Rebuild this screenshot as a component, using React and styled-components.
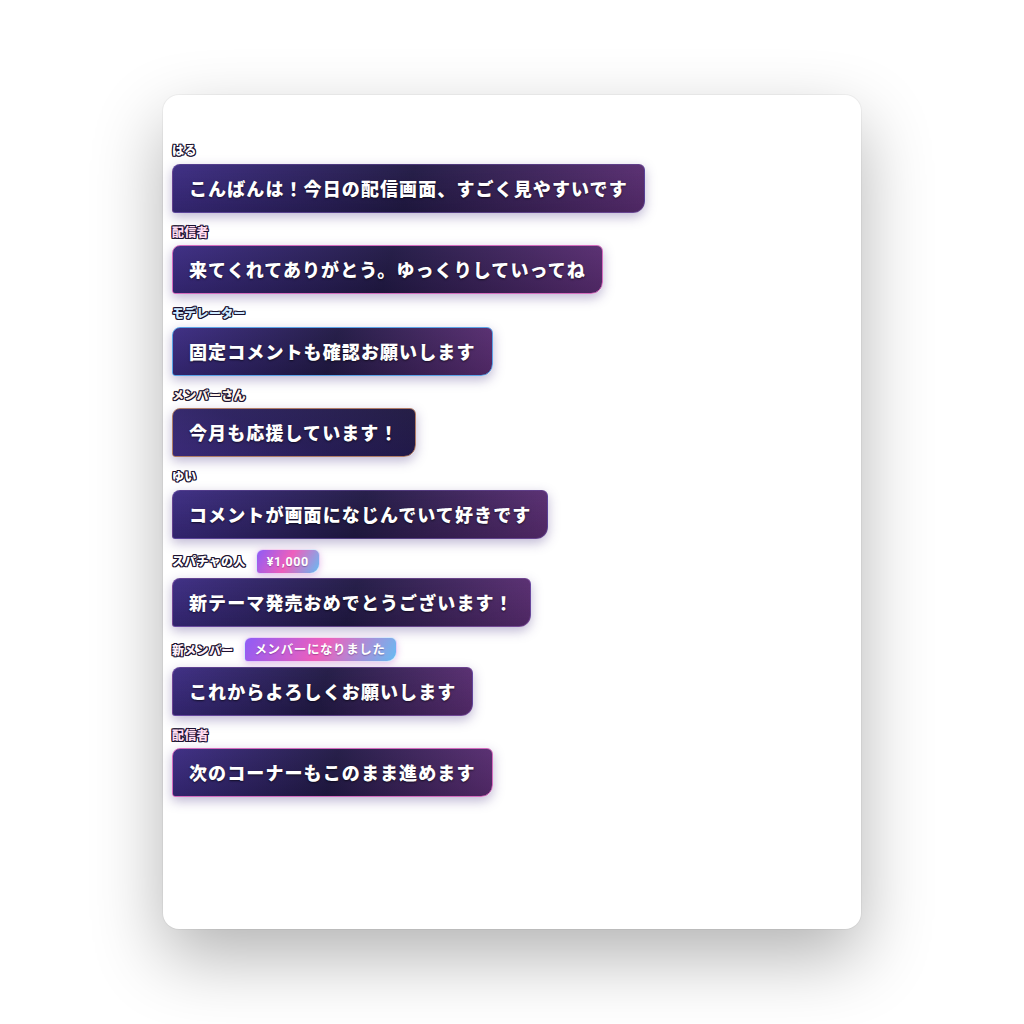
import React from "react";
import styled, { createGlobalStyle } from "styled-components";

const GlobalStyle = createGlobalStyle`
  html, body {
    margin: 0;
    padding: 0;
    background: #ffffff;
  }
  body {
    font-family: "Noto Sans CJK JP", "Noto Sans", sans-serif;
  }
`;

const Stage = styled.div`
  min-height: 100vh;
  display: flex;
  align-items: center;
  justify-content: center;
`;

const Card = styled.div`
  width: 698px;
  height: 834px;
  box-sizing: border-box;
  background: #ffffff;
  border-radius: 16px;
  box-shadow: 0 28px 70px rgba(0, 0, 0, 0.3), 0 0 0 1px rgba(0, 0, 0, 0.04);
  padding: 46px 9px 0 9px;
`;

const ChatList = styled.div`
  display: flex;
  flex-direction: column;
  gap: 10px;
`;

const Message = styled.div`
  display: flex;
  flex-direction: column;
  align-items: flex-start;
  gap: 4.5px;
`;

const NameRow = styled.div`
  display: flex;
  align-items: center;
  gap: 10px;
  min-height: 18px;
`;

const Name = styled.span`
  font-family: "Noto Sans CJK JP", sans-serif;
  font-size: 12px;
  font-weight: 900;
  line-height: 18px;
  letter-spacing: 0.3px;
  color: ${(p) => p.$color};
  text-shadow:
    1px 0 0 #1b1230, -1px 0 0 #1b1230, 0 1px 0 #1b1230, 0 -1px 0 #1b1230,
    1px 1px 0 #1b1230, -1px -1px 0 #1b1230, 1px -1px 0 #1b1230, -1px 1px 0 #1b1230;
`;

const Badge = styled.span`
  display: inline-block;
  height: 25px;
  box-sizing: border-box;
  padding: 0 10px;
  font-family: Roboto, "Noto Sans CJK JP", sans-serif;
  font-size: 12.5px;
  font-weight: 700;
  line-height: 23px;
  letter-spacing: 0.6px;
  color: #ffffff;
  border: 1px solid rgba(255, 255, 255, 0.7);
  border-radius: 7px 6px 10px 4px;
  background: linear-gradient(120deg, #8e5cf6 0%, #ee5fbc 50%, #66bcf3 100%);
  box-shadow: 0 2px 7px rgba(190, 90, 200, 0.35);
  text-shadow: 0 1px 1px rgba(60, 20, 80, 0.35);
`;

const Bubble = styled.div`
  box-sizing: border-box;
  padding: 11px 16px;
  border: 1px solid ${(p) => p.$border};
  border-radius: 8px 6px 12px 3px;
  background:
    linear-gradient(to bottom, rgba(255, 255, 255, 0.03), rgba(0, 0, 0, 0.14)),
    ${(p) =>
      p.$flip
        ? "linear-gradient(20deg, #43308a 0%, #2b2060 45%, #1e1740 100%)"
        : "linear-gradient(105deg, #3b2b82 0%, #211945 50%, #5a2d72 100%)"};
  box-shadow: 0 4px 12px rgba(70, 50, 130, 0.35);
  color: #ffffff;
  font-family: "Noto Sans CJK JP", sans-serif;
  font-size: 18px;
  font-weight: 900;
  line-height: 25px;
  letter-spacing: 1.1px;
  white-space: nowrap;
  text-shadow: 0 1px 2px rgba(0, 0, 0, 0.6);
`;

const messages = [
  { name: "はる", nameColor: "#ffffff", border: "rgba(120, 90, 180, 0.5)", text: "こんばんは！今日の配信画面、すごく見やすいです" },
  { name: "配信者", nameColor: "#ffdcf0", border: "#d46cbe", text: "来てくれてありがとう。ゆっくりしていってね" },
  { name: "モデレーター", nameColor: "#cfeaff", border: "#5aa2e6", text: "固定コメントも確認お願いします" },
  { name: "メンバーさん", nameColor: "#fff0e6", border: "#b07c66", text: "今月も応援しています！", flip: true },
  { name: "ゆい", nameColor: "#ffffff", border: "rgba(120, 90, 180, 0.5)", text: "コメントが画面になじんでいて好きです" },
  { name: "スパチャの人", nameColor: "#ffffff", border: "rgba(150, 100, 190, 0.5)", text: "新テーマ発売おめでとうございます！", badge: "¥1,000" },
  { name: "新メンバー", nameColor: "#fff0f8", border: "rgba(140, 95, 190, 0.5)", text: "これからよろしくお願いします", badge: "メンバーになりました" },
  { name: "配信者", nameColor: "#ffdcf0", border: "#d46cbe", text: "次のコーナーもこのまま進めます" },
];

export default function App() {
  return (
    <>
      <GlobalStyle />
      <Stage>
        <Card>
          <ChatList>
            {messages.map((m, i) => (
              <Message key={i}>
                <NameRow>
                  <Name $color={m.nameColor}>{m.name}</Name>
                  {m.badge && <Badge>{m.badge}</Badge>}
                </NameRow>
                <Bubble $border={m.border} $flip={m.flip}>
                  {m.text}
                </Bubble>
              </Message>
            ))}
          </ChatList>
        </Card>
      </Stage>
    </>
  );
}
